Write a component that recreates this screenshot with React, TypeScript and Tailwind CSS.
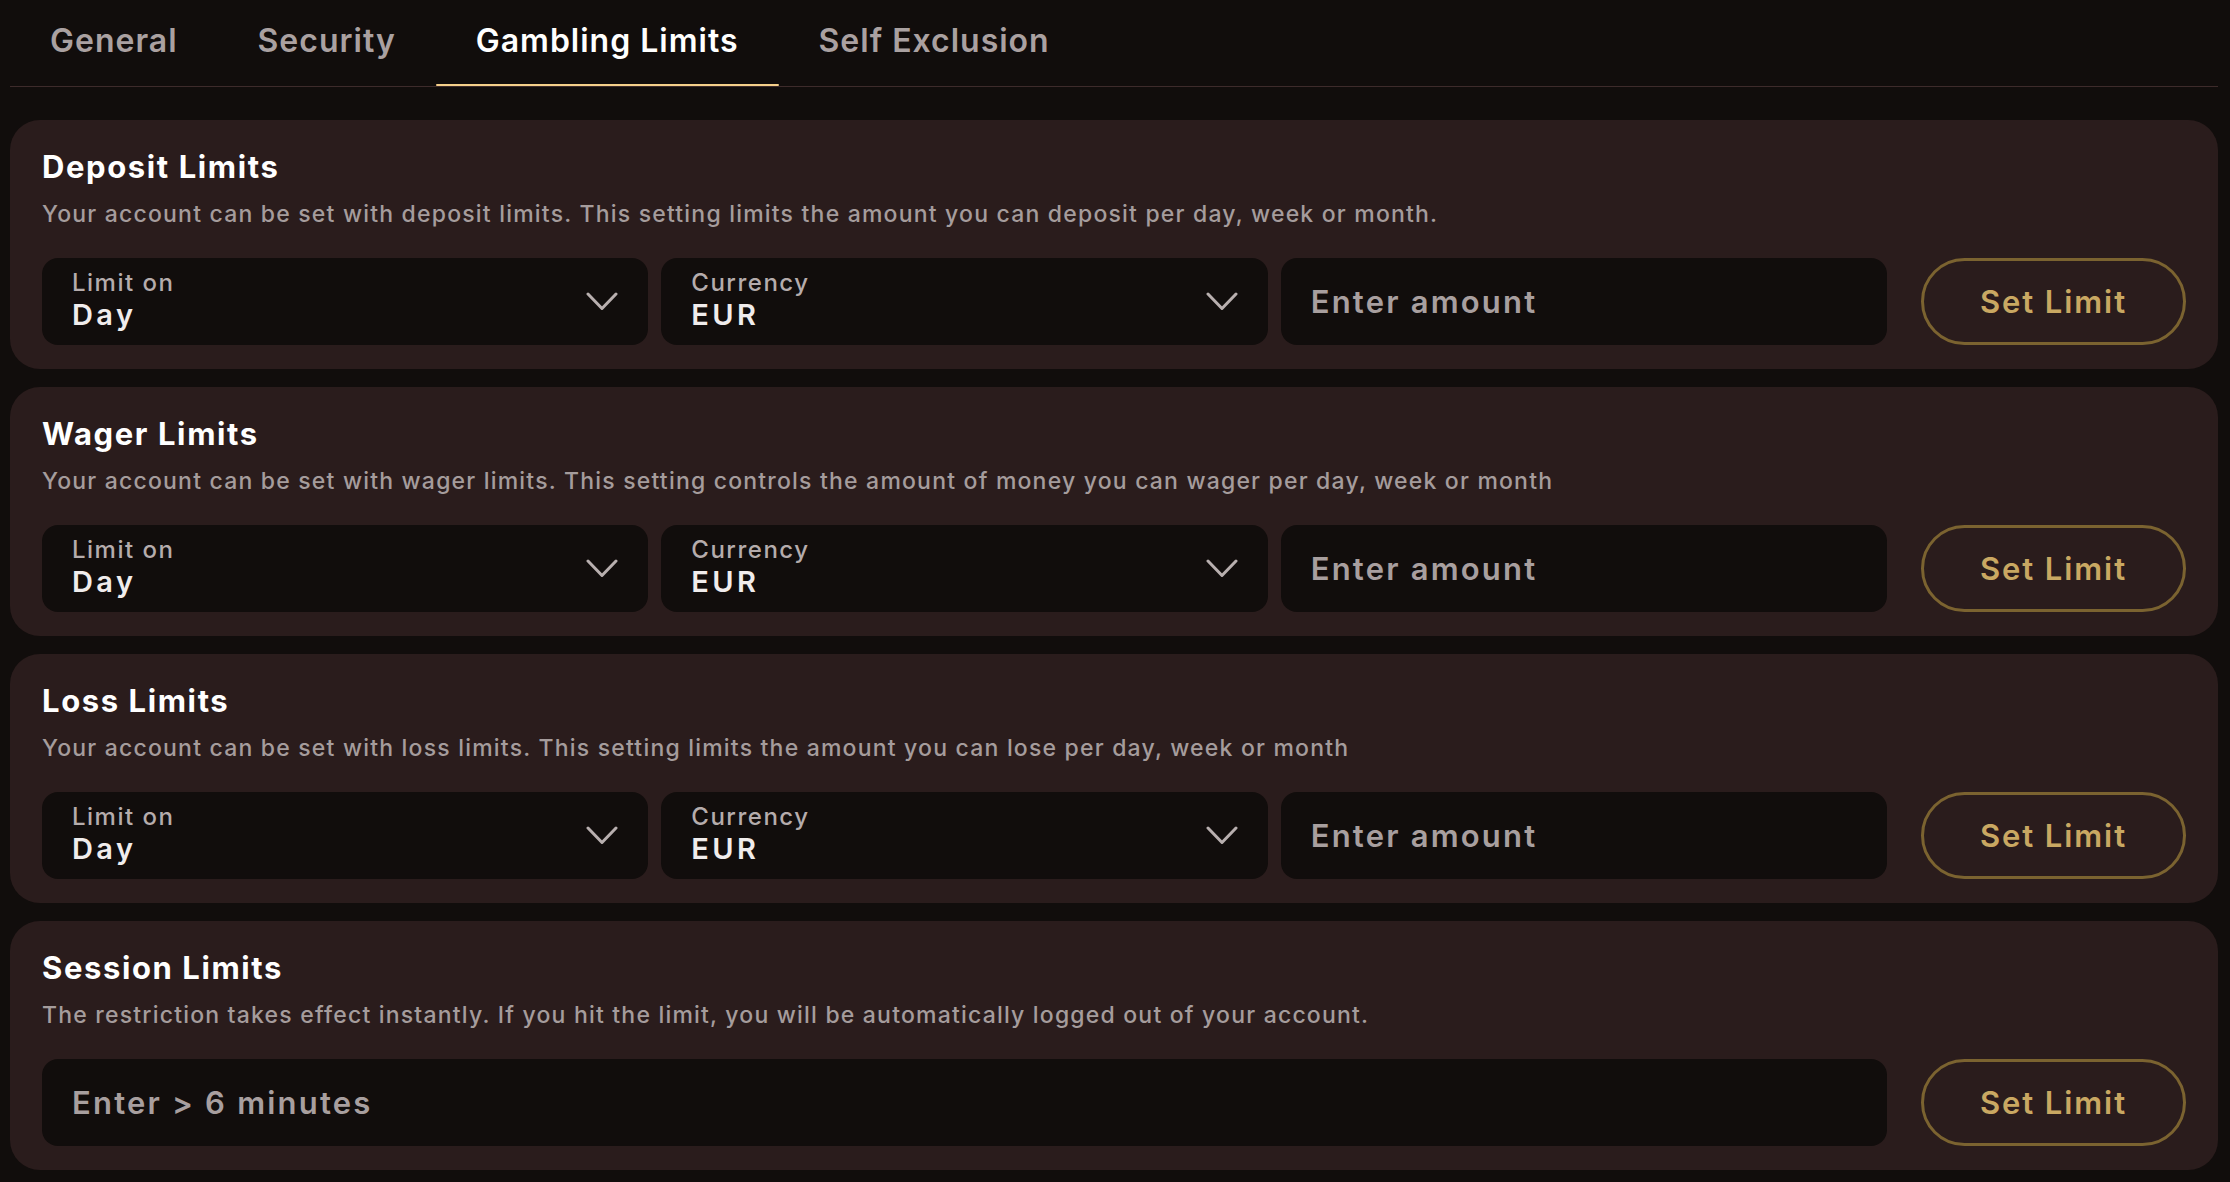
import React from "react";

const Chevron = () => (
  <svg width="32" height="19" viewBox="0 0 32 19" fill="none" className="shrink-0">
    <polyline points="2,2 16,16.5 30,2" stroke="#b8afaf" strokeWidth="3" strokeLinecap="round" strokeLinejoin="round" />
  </svg>
);

const Select = ({ label, value }: { label: string; value: string }) => (
  <div className="flex h-[87px] items-center justify-between rounded-[16px] bg-[#110d0c] pl-[30px] pr-[30px]">
    <div className="flex flex-col pb-[3px]">
      <span className="text-[24px] leading-[28px] font-medium tracking-[1.5px] text-[#b5acac]">{label}</span>
      <span className="mt-[2px] text-[29px] leading-[32px] font-semibold tracking-[3.4px] text-[#f0ecec]">{value}</span>
    </div>
    <Chevron />
  </div>
);

const Input = ({ placeholder }: { placeholder: string }) => (
  <div className="flex h-[87px] items-center rounded-[16px] bg-[#110d0c] pl-[30px]">
    <span className="text-[31px] leading-[36px] font-semibold tracking-[2.2px] text-[#a89f9f]">{placeholder}</span>
  </div>
);

const SetLimit = () => (
  <button className="ml-[34px] flex h-[87px] w-[265px] shrink-0 items-center justify-center rounded-full border-[3px] border-[#7b6330] bg-transparent">
    <span className="text-[31px] leading-[36px] font-semibold tracking-[1.9px] text-[#c9a862]">Set Limit</span>
  </button>
);

const Card = ({ title, desc, session }: { title: string; desc: string; session?: boolean }) => (
  <div className="rounded-[30px] bg-[#2a1c1c] px-[32px] pt-[29px] pb-[24px]">
    <h2 className="text-[31px] leading-[36px] font-bold tracking-[1.6px] text-white">{title}</h2>
    <p className="mt-[13px] text-[23px] leading-[32px] font-medium tracking-[1.2px] text-[#a59c9c]">{desc}</p>
    <div className="mt-[28px] flex">
      {session ? (
        <div className="flex-1">
          <Input placeholder="Enter > 6 minutes" />
        </div>
      ) : (
        <div className="grid flex-1 grid-cols-3 gap-[13px]">
          <Select label="Limit on" value="Day" />
          <Select label="Currency" value="EUR" />
          <Input placeholder="Enter amount" />
        </div>
      )}
      <SetLimit />
    </div>
  </div>
);

export default function App() {
  const tabs = ["General", "Security", "Gambling Limits", "Self Exclusion"];
  return (
    <div
      className="min-h-screen w-full bg-[#110d0c] pl-[10px] pr-[12px]"
      style={{ fontFamily: "Inter, 'Open Sans', sans-serif" }}
    >
      <div className="flex border-b border-[#3d2b2b]">
        {tabs.map((t) => {
          const active = t === "Gambling Limits";
          return (
            <div key={t} className="relative h-[86px] px-[40px] pt-[21px]">
              <span
                className={
                  "block text-[32px] leading-[40px] font-semibold tracking-[1px] whitespace-nowrap " +
                  (active ? "text-white" : "text-[#aaa1a1]")
                }
              >
                {t}
              </span>
              {active && <div className="absolute bottom-0 left-0 right-0 h-[2px] rounded-full bg-[#f5cf8a]" />}
            </div>
          );
        })}
      </div>
      <div className="mt-[33px] flex flex-col gap-[18px]">
        <Card
          title="Deposit Limits"
          desc="Your account can be set with deposit limits. This setting limits the amount you can deposit per day, week or month."
        />
        <Card
          title="Wager Limits"
          desc="Your account can be set with wager limits. This setting controls the amount of money you can wager per day, week or month"
        />
        <Card
          title="Loss Limits"
          desc="Your account can be set with loss limits. This setting limits the amount you can lose per day, week or month"
        />
        <Card
          title="Session Limits"
          desc="The restriction takes effect instantly. If you hit the limit, you will be automatically logged out of your account."
          session
        />
      </div>
    </div>
  );
}
